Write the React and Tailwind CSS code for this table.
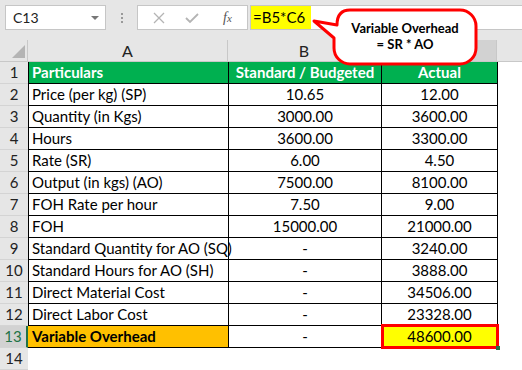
import React from "react";

const rows = [
  ["Price (per kg) (SP)", "10.65", "12.00"],
  ["Quantity (in Kgs)", "3000.00", "3600.00"],
  ["Hours", "3600.00", "3300.00"],
  ["Rate (SR)", "6.00", "4.50"],
  ["Output (in kgs) (AO)", "7500.00", "8100.00"],
  ["FOH Rate per hour", "7.50", "9.00"],
  ["FOH", "15000.00", "21000.00"],
  ["Standard Quantity for AO (SQ)", "-", "3240.00"],
  ["Standard Hours for AO (SH)", "-", "3888.00"],
  ["Direct Material Cost", "-", "34506.00"],
  ["Direct Labor Cost", "-", "23328.00"],
];

const RowHead = ({ n, active }) => (
  <div
    className={`w-[28px] shrink-0 flex items-center justify-center border-b border-[#d4d4d4] text-[15px] text-[#222] ${
      active ? "bg-[#d2d2d2] text-[#217346] border-r-2 border-r-[#217346]" : "bg-[#e6e6e6]"
    }`}
  >
    {n}
  </div>
);

const Callout = () => (
  <>
    <svg className="absolute left-0 top-0 pointer-events-none" width="522" height="370" viewBox="0 0 522 370">
      <path
        d="M350 10 H460 A16 16 0 0 1 476 26 V48 A16 16 0 0 1 460 64 H350 A16 16 0 0 1 334 48 V38 L314 21 L337 25 Q337 10 350 10 Z"
        fill="#fff"
        stroke="#ff0000"
        strokeWidth="3"
        strokeLinejoin="round"
      />
    </svg>
    <div className="absolute left-[334px] top-[20px] w-[142px] text-center text-[13px] font-bold leading-[16px] text-black">
      <div>Variable Overhead</div>
      <div>= SR * AO</div>
    </div>
  </>
);

export default function App() {
  return (
    <div className="relative w-[522px] h-[370px] overflow-hidden bg-white font-['Lato',sans-serif] text-black">
      {/* formula bar */}
      <div className="h-[40px] bg-[#e6e6e6] flex items-start pt-[5px] pl-[5px]">
        <div className="w-[101px] h-[25px] bg-white border border-[#c6c6c6] flex items-center justify-between pl-[7px] pr-[6px] text-[14px] text-[#222]">
          <span>C13</span>
          <span className="w-0 h-0 border-l-[4px] border-r-[4px] border-t-[4px] border-l-transparent border-r-transparent border-t-[#777]" />
        </div>
        <div className="w-[31px] h-[25px] flex flex-col items-center justify-center gap-[2px]">
          <span className="w-[2px] h-[2px] bg-[#999]" />
          <span className="w-[2px] h-[2px] bg-[#999]" />
          <span className="w-[2px] h-[2px] bg-[#999]" />
        </div>
        <div className="w-[111px] h-[25px] bg-white border border-[#c6c6c6] flex items-center text-[#b8b8b8]">
          <svg width="12" height="12" viewBox="0 0 12 12" className="ml-[15px]">
            <path d="M1 1 L11 11 M11 1 L1 11" stroke="#b4b4b4" strokeWidth="1.3" />
          </svg>
          <svg width="14" height="12" viewBox="0 0 14 12" className="ml-[20px]">
            <path d="M1 6 L5 10 L13 2" stroke="#b4b4b4" strokeWidth="1.8" fill="none" />
          </svg>
          <span className="ml-[24px] font-['Liberation_Serif',serif] italic text-[14px] text-[#555]">
            f<span className="text-[11px]">x</span>
          </span>
        </div>
        <div className="flex-1 h-[25px] ml-[2px] bg-white border-y border-l border-[#c6c6c6] flex items-center">
          <span className="h-full flex items-center bg-[#ffff00] pl-[2px] pr-[6px] text-[15px]">=B5*C6</span>
        </div>
      </div>

      {/* column headers */}
      <div className="flex h-[22px] text-[16px] text-[#222]">
        <div className="w-[28px] shrink-0 bg-[#e6e6e6] border-r border-b border-[#c8c8c8] relative">
          <svg className="absolute left-[12px] top-[5px]" width="13" height="13" viewBox="0 0 13 13">
            <path d="M13 0 L13 13 L0 13 Z" fill="#b4b4b4" />
          </svg>
        </div>
        <div className="w-[200px] shrink-0 bg-[#e6e6e6] border-r border-b border-[#c8c8c8] flex items-center justify-center">A</div>
        <div className="w-[153px] shrink-0 bg-[#e6e6e6] border-r border-b border-[#c8c8c8] flex items-center justify-center">B</div>
        <div className="w-[116px] shrink-0 bg-[#d2d2d2] border-r border-b border-[#c8c8c8] flex items-center justify-center">C</div>
        <div className="flex-1 bg-[#e6e6e6] border-b border-[#c8c8c8]" />
      </div>

      {/* row 1 */}
      <div className="flex h-[22px]">
        <RowHead n={1} />
        <div className="w-[201px] shrink-0 bg-[#00b050] border-x border-b border-black flex items-center pl-[3px] text-[15px] font-bold text-white">Particulars</div>
        <div className="w-[153px] shrink-0 bg-[#00b050] border-r border-b border-black flex items-center justify-center text-[15px] font-bold text-white">Standard / Budgeted</div>
        <div className="w-[116px] shrink-0 bg-[#00b050] border-r border-b border-black flex items-center justify-center text-[15px] font-bold text-white">Actual</div>
        <div className="flex-1" />
      </div>

      {rows.map((r, i) => (
        <div key={i} className="flex h-[22px] text-[15px]">
          <RowHead n={i + 2} />
          <div className="w-[201px] shrink-0 border-x border-b border-black flex items-center pl-[3px] whitespace-nowrap">{r[0]}</div>
          <div className="w-[153px] shrink-0 border-r border-b border-black flex items-center justify-center">{r[1]}</div>
          <div className="w-[116px] shrink-0 border-r border-b border-black flex items-center justify-center">{r[2]}</div>
          <div className="flex-1" />
        </div>
      ))}

      {/* row 13 */}
      <div className="flex h-[22px] text-[15px]">
        <RowHead n={13} active />
        <div className="w-[201px] shrink-0 bg-[#ffc000] border-r border-b border-black flex items-center pl-[4px] font-bold">Variable Overhead</div>
        <div className="w-[153px] shrink-0 border-r border-b border-black flex items-center justify-center">-</div>
        <div className="w-[116px] shrink-0 relative border-r border-b border-black bg-[#ffff00] flex items-center justify-center">
          48600.00
          <span className="absolute -left-[1px] -top-[2px] -right-[2px] -bottom-[2px] border-[3px] border-[#ff0000]" />
          <span className="absolute -right-[3px] -bottom-[3px] w-[4px] h-[4px] bg-[#217346]" />
        </div>
        <div className="flex-1" />
      </div>

      {/* row 14 */}
      <div className="flex h-[22px]">
        <RowHead n={14} />
        <div className="flex-1" />
      </div>

      <Callout />
    </div>
  );
}
